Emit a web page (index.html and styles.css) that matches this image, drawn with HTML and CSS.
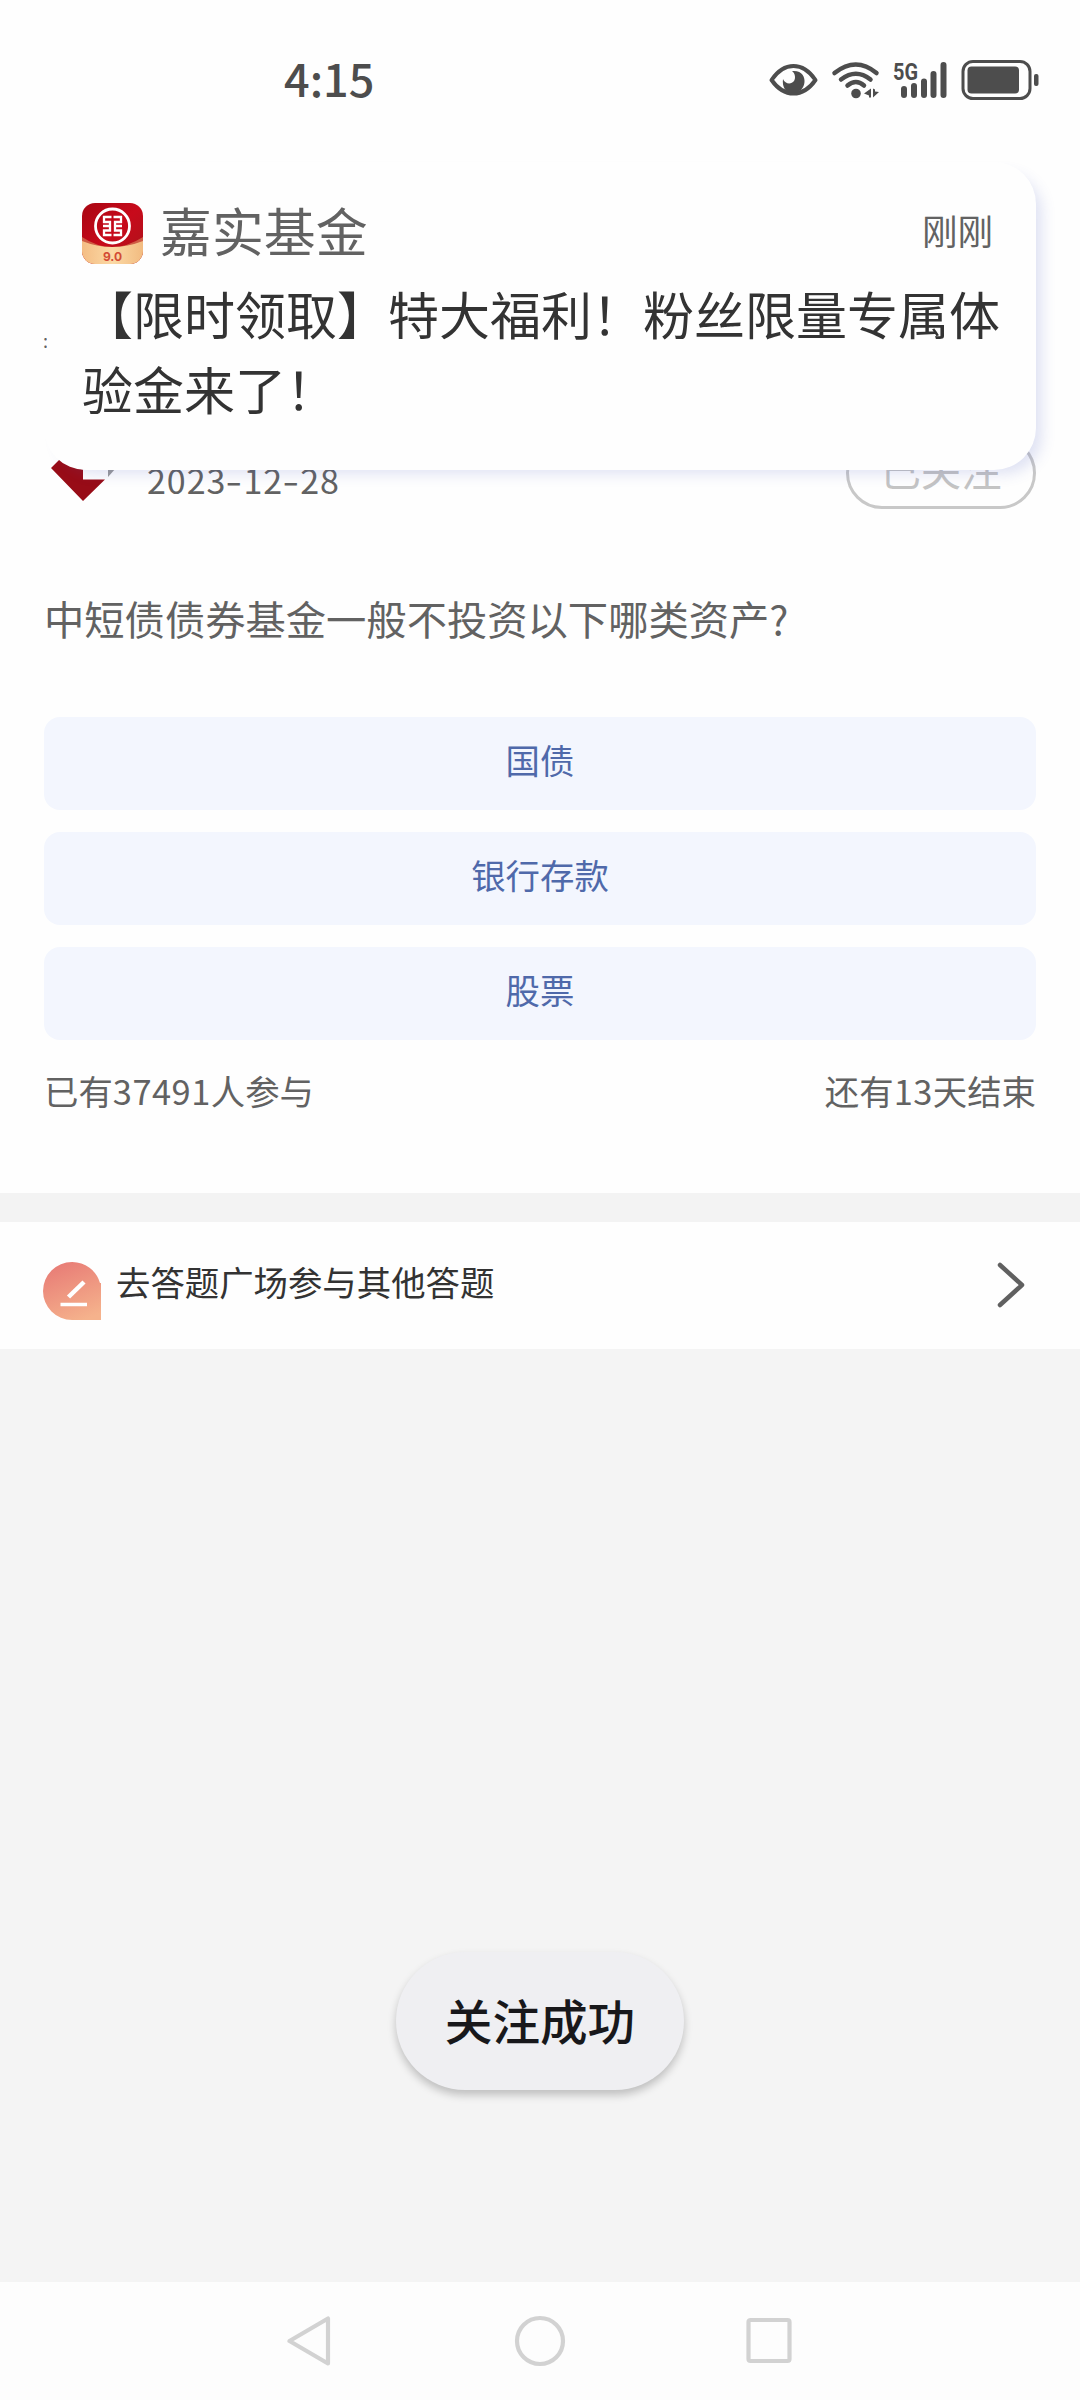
FILE: index.html
```html
<!DOCTYPE html>
<html lang="zh-CN">
<head>
<meta charset="utf-8">
<title>嘉实基金</title>
<link rel="stylesheet" href="styles.css">
</head>
<body>
<div class="screen">
  <header class="status">
    <span class="clock">4:15</span>
    <svg class="status-icons" width="280" height="60" viewBox="0 0 280 60" fill="none" stroke="#4d4d4d" stroke-linecap="round" stroke-linejoin="round">
      <path d="M11.500 30Q21 16 33.500 16T55.500 30Q46 43.500 33.500 43.500T11.500 30Z" stroke-width="4"/>
      <path d="M32 21C42 20 45 27 44.500 32C44 38 40 43 33 43C25 43 22 36 23 29C25 34 31 35 34 31C36 28 35 23 32 21Z" fill="#4d4d4d" stroke="none"/>
      <g stroke-width="4.500"><path d="M74.500 23Q96 6 116.500 23"/><path d="M81 29.500Q96 18 110.500 29.500"/><path d="M87.500 35.500Q96 28.500 104 35.500"/></g>
      <circle cx="96" cy="43.500" r="4.800" fill="#4d4d4d" stroke="none"/>
      <path d="M111 38.500V47.500H109V45.500L104 43.500ZM113 38.500V47.500L119 42L115 41.500V39.500Z" fill="#4d4d4d" stroke="none"/>
      <text class="network" x="133" y="29.500" textLength="25" lengthAdjust="spacingAndGlyphs">5G</text>
      <path d="M144 39V45M154 36V45M164 31.500V45M173.500 24V45M183.500 15V45" stroke-width="6"/>
      <rect x="203" y="11.500" width="67" height="37" rx="10" stroke-width="3"/>
      <rect x="207.500" y="16.500" width="51.500" height="27" rx="4" fill="#4d4d4d" stroke="none"/>
      <rect x="274" y="24" width="4.500" height="12" rx="2" fill="#4d4d4d" stroke="none"/>
    </svg>
  </header>

  <main class="post">
    <div class="author">
      <svg class="avatar" width="74" height="56" viewBox="0 0 74 56">
        <path d="M7 22L17 12Q27 22 39 23.500V33.500H61L39 55Z" fill="#980c17"/>
        <path d="M64 22H72L64 31Z" fill="#999"/>
      </svg>
      <time class="date">2023<span class="dash">-</span>12<span class="dash">-</span>28</time>
      <span class="follow">已关注</span>
    </div>
    <h1 class="question">中短债债券基金一般不投资以下哪类资产?</h1>
    <div class="options">
      <div class="option">国债</div>
      <div class="option">银行存款</div>
      <div class="option">股票</div>
    </div>
    <div class="stats"><span>已有<span class="count">37491</span>人参与</span><span>还有<span class="count">13</span>天结束</span></div>
  </main>

  <section class="more">
    <svg class="edit" width="58" height="58" viewBox="0 0 58 58">
      <defs><linearGradient id="coral" x1="0.300" y1="0" x2="0.700" y2="1"><stop stop-color="#e87c76"/><stop offset="1" stop-color="#f5b28c"/></linearGradient></defs>
      <path d="M29 0A29 29 0 0 1 57 21H58V58H29A29 29 0 0 1 29 0Z" fill="url(#coral)"/>
      <path d="M25.500 35L41 20" stroke="#fff" stroke-width="4.500"/>
      <path d="M17.500 42.500H44" stroke="#fff" stroke-width="3.500"/>
    </svg>
    <span class="more-text">去答题广场参与其他答题</span>
    <svg class="chevron" width="28" height="46" viewBox="0 0 28 46" fill="none"><path d="M3 3L25 23L3 43" stroke="#606060" stroke-width="4.500" stroke-linecap="round" stroke-linejoin="round"/></svg>
  </section>

  <section class="blank"></section>

  <nav class="nav">
    <svg width="506" height="52" viewBox="0 0 506 52" fill="none" stroke="#d2d2d2" stroke-width="4.200" stroke-linejoin="round">
      <path d="M41 3.500V48.500L2.500 26Z"/>
      <circle cx="253" cy="26" r="23"/>
      <rect x="461.500" y="5" width="41" height="41" rx="2"/>
    </svg>
  </nav>

  <aside class="notice">
    <div class="notice-head">
      <svg class="logo" width="61" height="61" viewBox="0 0 61 61">
        <defs>
          <clipPath id="tile"><rect width="61" height="61" rx="13"/></clipPath>
          <linearGradient id="red" x1="0" y1="0" x2="1" y2="1"><stop stop-color="#a80612"/><stop offset="0.500" stop-color="#c80a1b"/><stop offset="1" stop-color="#a9141b"/></linearGradient>
          <linearGradient id="gold"><stop stop-color="#f4bd84"/><stop offset="0.500" stop-color="#fbd9a5"/><stop offset="1" stop-color="#f2bb80"/></linearGradient>
        </defs>
        <g clip-path="url(#tile)">
          <rect width="61" height="61" fill="url(#red)"/>
          <path d="M0 34Q30 54 61 34V61H0Z" fill="#cf5c44"/>
          <path d="M0 38Q30 50 61 38V61H0Z" fill="url(#gold)"/>
        </g>
        <circle cx="30.500" cy="23" r="17" fill="none" stroke="#fff" stroke-width="2.800"/>
        <path d="M29.500 14H22V19H28V23H21M28 23V27.500H22V32H29.500M31.500 14H39V19H33V23H40M33 23V27.500H39V32H31.500" fill="none" stroke="#fff" stroke-width="2.300"/>
        <text class="version" x="30.500" y="58" text-anchor="middle">9.0</text>
      </svg>
      <span class="app">嘉实基金</span>
      <span class="when">刚刚</span>
    </div>
    <p class="message">【限时领取】特大福利！粉丝限量专属体验金来了！</p>
  </aside>

  <span class="speck">:</span>
  <div class="toast">关注成功</div>
</div>
</body>
</html>
```

FILE: styles.css
```css
* { box-sizing: border-box; }
body { margin: 0; background: #fefefe; font-family: "Noto Sans CJK SC", "Noto Sans", sans-serif; color: #626262; }
.screen { position: relative; display: flex; flex-direction: column; width: 1080px; height: 2400px; overflow: hidden; }

.status { display: flex; justify-content: space-between; height: 160px; padding: 50px 40px 0 284px; }
.clock { margin-top: -2px; font-size: 45px; line-height: 60px; font-weight: 500; color: #4d4d4d; }
.network { font: 700 24px Roboto, sans-serif; fill: #4d4d4d; stroke: none; }

.post { display: flex; flex-direction: column; height: 1033px; padding: 277px 44px 0; }
.author { display: flex; height: 72px; }
.avatar { margin-top: 9px; }
.date { margin: 20px 0 0 29px; font-size: 34px; line-height: 46px; letter-spacing: 1px; }
.dash { display: inline-block; width: 17px; text-align: center; transform: scaleX(1.400); }
.follow { width: 190px; height: 72px; margin-left: auto; border: 3px solid #c8c8c8; border-radius: 40px; font-size: 40.400px; line-height: 58px; text-align: center; color: #c4c4c4; }
.question { margin: 79px 0 0; font-size: 40.300px; line-height: 60px; font-weight: 400; white-space: nowrap; }
.options { display: flex; flex-direction: column; gap: 22px; margin-top: 69px; }
.option { height: 93px; border-radius: 16px; background: #f3f6fe; font-size: 34.400px; line-height: 84px; text-align: center; color: #4f69aa; }
.stats { display: flex; justify-content: space-between; margin-top: 25px; font-size: 34.400px; line-height: 50px; }
.count { letter-spacing: 0.500px; }

.more { display: flex; height: 156px; border-top: 29px solid #f3f3f3; padding: 40px 55px 0 43px; }
.more-text { margin: -6px auto 0 15px; font-size: 34.400px; line-height: 50px; color: #333; }
.blank { flex: 1; background: #f4f4f4; }
.nav { display: flex; justify-content: center; height: 118px; padding-top: 33px; background: #fdfdfd; }

.notice { position: absolute; left: 44px; top: 162px; width: 992px; height: 308px; padding: 41px 30px 0 38px; border-radius: 42px; background: #fefefe; box-shadow: 10px 8px 14px -4px rgba(70, 90, 190, 0.170); }
.notice-head { display: flex; height: 60px; }
.app { margin-left: 17px; font-size: 51.900px; line-height: 53px; }
.when { margin: 0 13px 0 auto; font-size: 35.500px; line-height: 54px; }
.message { margin: 13px 0 0; font-size: 51px; line-height: 75px; color: #333; }
.version { font: 700 12px Inter, sans-serif; fill: #d34b35; }
.speck { position: absolute; left: 43px; top: 328px; width: 4px; overflow: hidden; font-size: 18px; line-height: 24px; }

.toast { position: absolute; left: 396px; top: 1952px; width: 288px; height: 138px; border-radius: 69px; background: #efeff2; box-shadow: 0 5px 8px rgba(0, 0, 0, 0.220); font-size: 47.600px; line-height: 135px; font-weight: 500; text-align: center; color: #18181b; }
```
